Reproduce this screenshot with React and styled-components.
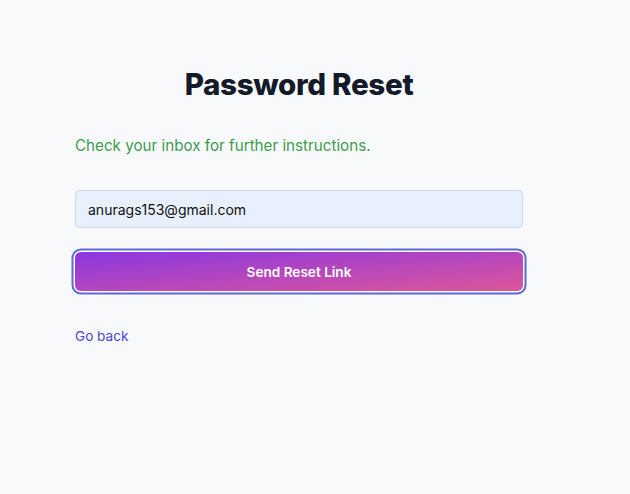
import React, { useState } from 'react';
import styled, { createGlobalStyle } from 'styled-components';

const GlobalStyle = createGlobalStyle`
  * { box-sizing: border-box; }
  html, body {
    margin: 0;
    padding: 0;
    background: #f8f9fb;
    font-family: Inter, "Noto Sans", Arial, sans-serif;
  }
`;

const Page = styled.div`
  min-height: 494px;
  padding: 65px 0 0 75px;
`;

const Card = styled.div`
  width: 448px;
  display: flex;
  flex-direction: column;
`;

const Title = styled.h1`
  margin: 0;
  text-align: center;
  font-size: 29.5px;
  line-height: 38px;
  font-weight: 800;
  color: #131a2a;
  letter-spacing: -0.3px;
`;

const Notice = styled.p`
  margin: 31px 0 0;
  font-size: 15.2px;
  line-height: 24px;
  color: #3f9c50;
`;

const Form = styled.form`
  margin-top: 32px;
  display: flex;
  flex-direction: column;
  gap: 24px;
`;

const Input = styled.input`
  height: 38px;
  width: 100%;
  padding: 0 12px;
  border: 1px solid #d3d8df;
  border-radius: 4px;
  background: #e8f0fe;
  color: #111;
  font-family: inherit;
  font-size: 14px;
  outline: none;
`;

const Button = styled.button`
  height: 39px;
  width: 100%;
  border: none;
  border-radius: 6px;
  background: linear-gradient(to bottom right, #8a37e2, #de569a);
  color: #fff;
  font-family: inherit;
  font-size: 13.6px;
  font-weight: 600;
  cursor: pointer;
  box-shadow: ${p => (p.$focused ? '0 0 0 1.5px #fff, 0 0 0 3.5px #5d67d6' : 'none')};
`;

const BackLink = styled.a`
  margin-top: 35px;
  align-self: flex-start;
  font-size: 13.6px;
  line-height: 20px;
  color: #4f46d4;
  text-decoration: none;
  cursor: pointer;
`;

const App = () => {
  const [email, setEmail] = useState('anurags153@gmail.com');

  return (
    <>
      <GlobalStyle />
      <Page>
        <Card>
          <Title>Password Reset</Title>
          <Notice>Check your inbox for further instructions.</Notice>
          <Form onSubmit={e => e.preventDefault()}>
            <Input
              type="email"
              value={email}
              onChange={e => setEmail(e.target.value)}
            />
            <Button type="submit" $focused>Send Reset Link</Button>
          </Form>
          <BackLink href="#">Go back</BackLink>
        </Card>
      </Page>
    </>
  );
};

export default App;
